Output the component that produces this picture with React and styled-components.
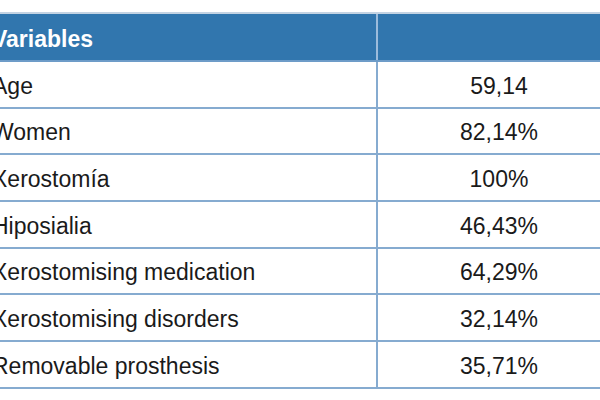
import React from 'react';
import styled, {createGlobalStyle} from "styled-components";

const GlobalStyle = createGlobalStyle`
  html, body {
    margin: 0;
    padding: 0;
    background: #ffffff;
    overflow: hidden;
  }
  body {
    font-family: "Liberation Sans", Arial, sans-serif;
  }
`;

const Page = styled.div`
  width: 600px;
  height: 400px;
  overflow: hidden;
  padding-top: 12px;
  box-sizing: border-box;
`;

const Table = styled.div`
  width: 632px;
  margin-left: -12px;
  border-top: 2px solid #c3d3e3;
`;

const Row = styled.div`
  display: grid;
  grid-template-columns: 390px 242px;
  height: ${props => props.$header ? "48px" : "46.67px"};
  box-sizing: border-box;
  border-bottom: 2px solid ${props => props.$header ? "#6d9cc8" : "#86abd0"};
  background: ${props => props.$header ? "#3176ae" : "#ffffff"};
  color: ${props => props.$header ? "#ffffff" : "#1a1a1a"};
  font-weight: ${props => props.$header ? "bold" : "normal"};
`;

const Cell = styled.div`
  display: flex;
  align-items: center;
  font-size: 23px;
  padding-left: ${props => props.$center ? "0" : "4px"};
  padding-top: 4px;
  box-sizing: border-box;
  justify-content: ${props => props.$center ? "center" : "flex-start"};
  border-right: ${props => props.$divider ? `2px solid ${props.$light ? "#9cbcdc" : "#86abd0"}` : "none"};
`;

const rows = [
    ["Age", "59,14"],
    ["Women", "82,14%"],
    ["Xerostomía", "100%"],
    ["Hiposialia", "46,43%"],
    ["Xerostomising medication", "64,29%"],
    ["Xerostomising disorders", "32,14%"],
    ["Removable prosthesis", "35,71%"],
];

const App = () => {
    return (
        <Page>
            <GlobalStyle/>
            <Table>
                <Row $header>
                    <Cell $divider $light>Variables</Cell>
                    <Cell $center></Cell>
                </Row>
                {rows.map(item => (
                    <Row key={item[0]}>
                        <Cell $divider>{item[0]}</Cell>
                        <Cell $center>{item[1]}</Cell>
                    </Row>
                ))}
            </Table>
        </Page>
    );
};

export default App;
